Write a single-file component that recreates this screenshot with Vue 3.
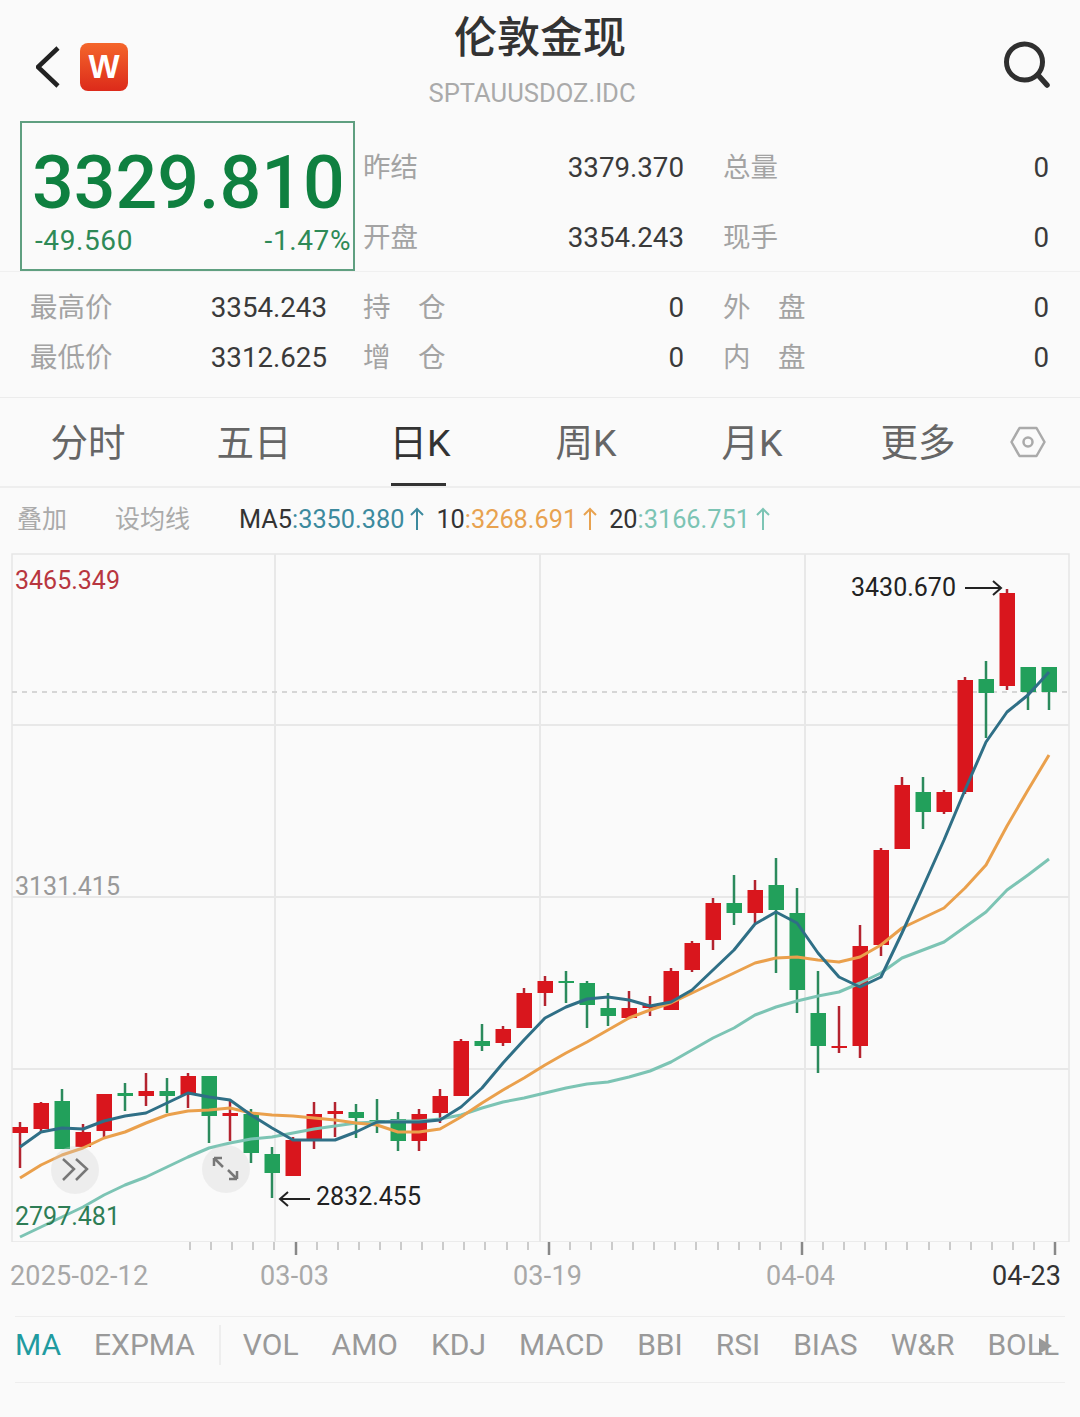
<template>
  <div class="page">
    <header class="top-bar">
      <div class="top-left">
        <svg class="back" width="24" height="44" viewBox="0 0 24 44">
          <path d="M22 3 L2 22 L22 41" fill="none" stroke="#222" stroke-width="4.5" />
        </svg>
        <div class="logo">W</div>
      </div>
      <div class="title-box">
        <div class="title">伦敦金现</div>
        <div class="code">SPTAUUSDOZ.IDC</div>
      </div>
      <div class="top-right">
        <svg width="50" height="50" viewBox="0 0 50 50">
          <circle cx="22.5" cy="21" r="18" fill="none" stroke="#2f2f2f" stroke-width="5" />
          <path d="M36 34 L45 44" stroke="#2f2f2f" stroke-width="5.5" stroke-linecap="round" />
        </svg>
      </div>
    </header>

    <section class="quote">
      <div class="price-box">
        <div class="price">3329.810</div>
        <div class="change">
          <span>-49.560</span>
          <span>-1.47%</span>
        </div>
      </div>
      <div class="quote-stats">
        <div v-for="row in topRows" :key="row[0]" class="quote-row">
          <div class="pair col-b"><span class="lbl">{{ row[0] }}</span><span class="val">{{ row[1] }}</span></div>
          <div class="pair col-c"><span class="lbl">{{ row[2] }}</span><span class="val">{{ row[3] }}</span></div>
        </div>
      </div>
    </section>

    <section class="stats">
      <div v-for="row in lowRows" :key="row[0]" class="stat-row">
        <div class="pair col-a"><span class="lbl">{{ row[0] }}</span><span class="val">{{ row[1] }}</span></div>
        <div class="pair col-b"><span class="lbl">{{ row[2] }}</span><span class="val">{{ row[3] }}</span></div>
        <div class="pair col-c"><span class="lbl">{{ row[4] }}</span><span class="val">{{ row[5] }}</span></div>
      </div>
    </section>

    <nav class="tabs">
      <div v-for="t in tabs" :key="t" class="tab" :class="{ active: t === '日K' }"><span class="tab-text">{{ t }}</span></div>
      <svg class="hex" width="36" height="32" viewBox="0 0 36 32">
        <path d="M1.5 16 L9.5 2 H26.5 L34.5 16 L26.5 30 H9.5 Z" fill="none" stroke="#aaa" stroke-width="2.5" stroke-linejoin="round" />
        <circle cx="18" cy="16" r="4.5" fill="none" stroke="#aaa" stroke-width="2.5" />
      </svg>
    </nav>

    <div class="legend">
      <span class="tool">叠加</span>
      <span class="tool second">设均线</span>
      <div class="ma-values">
        <span v-for="m in maLegend" :key="m.name" class="ma-item">
          <span class="ma-name">{{ m.name }}</span><span :style="{ color: m.color }">:{{ m.value }}</span>
          <svg class="up" width="16" height="24" viewBox="0 0 16 24">
            <path d="M8 23 V2 M2 8 L8 2 L14 8" fill="none" :stroke="m.color" stroke-width="2" />
          </svg>
        </span>
      </div>
    </div>

    <div class="chart">
      <svg class="plot" width="1080" height="689" viewBox="0 553 1080 689">
        <rect x="12" y="554" width="1057" height="688" fill="none" stroke="#e6e6e6" stroke-width="1.5" />
        <path d="M275 554 V1242 M540 554 V1242 M805 554 V1242 M12 725 H1069 M12 897 H1069 M12 1069 H1069" stroke="#e8e8e8" stroke-width="2" />
        <path d="M12 692 H1069" stroke="#d6d6d6" stroke-width="2" stroke-dasharray="5 5" />
        <g v-for="(c, i) in candles" :key="i">
          <line :x1="xAt(i)" :x2="xAt(i)" :y1="c[2]" :y2="c[3]" :stroke="c[4] === 'r' ? '#b3232f' : '#2b8a5c'" stroke-width="2.5" />
          <rect :x="xAt(i) - 7.5" :y="c[0]" width="15.5" :height="c[1] - c[0]" :fill="c[4] === 'r' ? '#d9161d' : '#22a05b'" />
        </g>
        <path :d="linePath(ma20)" fill="none" stroke="#7cc4b4" stroke-width="3" stroke-linejoin="round" />
        <path :d="linePath(ma10)" fill="none" stroke="#eaa04c" stroke-width="3" stroke-linejoin="round" />
        <path :d="linePath(ma5)" fill="none" stroke="#2f6f86" stroke-width="3" stroke-linejoin="round" />

        <circle cx="75" cy="1170" r="24" fill="#cfcfcf" fill-opacity="0.3" />
        <path d="M63 1159 L74 1169 L63 1180 M76 1159 L87 1169 L76 1180" fill="none" stroke="#777" stroke-width="2.5" />
        <circle cx="226" cy="1169" r="24" fill="#cfcfcf" fill-opacity="0.3" />
        <path d="M214 1158 L223 1167 M214 1158 V1166 M214 1158 H222 M237 1179 L228 1170 M237 1179 V1171 M237 1179 H229" fill="none" stroke="#777" stroke-width="2.5" />

        <path d="M965 588 H1001 M993 581 L1001 588 L993 595" fill="none" stroke="#222" stroke-width="2" />
        <path d="M310 1199 H280 M288 1192 L280 1199 L288 1206" fill="none" stroke="#222" stroke-width="2" />
      </svg>
      <span class="axis red">3465.349</span>
      <span class="axis mid">3131.415</span>
      <span class="axis green">2797.481</span>
      <span class="note high">3430.670</span>
      <span class="note low">2832.455</span>
    </div>

    <svg class="ruler" width="1080" height="14" viewBox="0 0 1080 14">
      <line v-for="t in ticks" :key="t.x" :x1="t.x" :x2="t.x" y1="0" :y2="t.major ? 13 : 8" :stroke="t.major ? '#888' : '#bbb'" :stroke-width="t.major ? 2.5 : 1.5" />
    </svg>

    <div class="dates">
      <span>2025-02-12</span>
      <span>03-03</span>
      <span>03-19</span>
      <span>04-04</span>
      <span class="last">04-23</span>
    </div>

    <div class="indicators">
      <span class="ind on">MA</span>
      <span class="ind">EXPMA</span>
      <span class="divider"></span>
      <span v-for="n in indicators" :key="n" class="ind">{{ n }}</span>
      <svg class="more" width="13" height="16" viewBox="0 0 13 16">
        <path d="M0 0 L13 8 L0 16 Z" fill="#999" />
      </svg>
    </div>
  </div>
</template>

<script setup>
const topRows = [
  ['昨结', '3379.370', '总量', '0'],
  ['开盘', '3354.243', '现手', '0'],
]

const lowRows = [
  ['最高价', '3354.243', '持　仓', '0', '外　盘', '0'],
  ['最低价', '3312.625', '增　仓', '0', '内　盘', '0'],
]

const tabs = ['分时', '五日', '日K', '周K', '月K', '更多']

const maLegend = [
  { name: 'MA5', value: '3350.380', color: '#3c8a9e' },
  { name: '10', value: '3268.691', color: '#e8a24f' },
  { name: '20', value: '3166.751', color: '#7cc4b4' },
]

const indicators = ['VOL', 'AMO', 'KDJ', 'MACD', 'BBI', 'RSI', 'BIAS', 'W&R', 'BOLL']

// body top, body bottom, wick top, wick bottom, colour (page pixels)
const candles = [
  [1127, 1133, 1122, 1168, 'r'], [1103, 1129, 1102, 1132, 'r'], [1101, 1149, 1089, 1149, 'g'],
  [1132, 1147, 1124, 1148, 'r'], [1094, 1131, 1094, 1137, 'r'], [1093, 1096, 1083, 1111, 'g'],
  [1091, 1096, 1073, 1106, 'r'], [1091, 1096, 1078, 1113, 'g'], [1076, 1095, 1073, 1108, 'r'],
  [1076, 1116, 1076, 1143, 'g'], [1113, 1116, 1100, 1141, 'r'], [1114, 1153, 1109, 1163, 'g'],
  [1154, 1173, 1147, 1198, 'g'], [1140, 1176, 1137, 1176, 'r'], [1114, 1139, 1102, 1149, 'r'],
  [1111, 1114, 1102, 1137, 'r'], [1112, 1118, 1104, 1138, 'g'], [1120, 1122, 1099, 1133, 'g'],
  [1119, 1141, 1112, 1151, 'g'], [1114, 1141, 1109, 1151, 'r'], [1096, 1113, 1089, 1123, 'r'],
  [1041, 1096, 1039, 1096, 'r'], [1041, 1046, 1024, 1051, 'g'], [1029, 1043, 1026, 1046, 'r'],
  [993, 1028, 988, 1028, 'r'], [981, 993, 976, 1006, 'r'], [981, 983, 971, 1003, 'g'],
  [983, 1005, 981, 1028, 'g'], [1008, 1016, 993, 1026, 'g'], [1008, 1018, 991, 1019, 'r'],
  [1005, 1008, 996, 1016, 'r'], [971, 1010, 968, 1010, 'r'], [943, 970, 941, 972, 'r'],
  [903, 940, 898, 950, 'r'], [903, 913, 875, 925, 'g'], [890, 913, 880, 923, 'r'],
  [885, 910, 858, 973, 'g'], [913, 990, 888, 1013, 'g'], [1013, 1046, 971, 1073, 'g'],
  [1046, 1048, 1006, 1053, 'r'], [946, 1046, 925, 1058, 'r'], [850, 945, 848, 956, 'r'],
  [785, 849, 777, 849, 'r'], [792, 812, 777, 829, 'g'], [792, 812, 790, 814, 'r'],
  [680, 792, 677, 794, 'r'], [679, 693, 661, 738, 'g'], [593, 686, 589, 690, 'r'],
  [667, 692, 667, 710, 'g'], [667, 692, 667, 710, 'g'],
]

const ma5 = [1147, 1132, 1128, 1129, 1121, 1116, 1113, 1103, 1093, 1097, 1100, 1115, 1128, 1140, 1140, 1140, 1132, 1122, 1122, 1122, 1120, 1107, 1088, 1063, 1040, 1018, 1007, 999, 997, 1000, 1006, 1002, 990, 970, 950, 924, 912, 923, 953, 977, 987, 977, 933, 887, 840, 790, 742, 712, 695, 672]
const ma10 = [1178, 1165, 1155, 1148, 1138, 1132, 1123, 1115, 1111, 1110, 1108, 1113, 1115, 1116, 1118, 1120, 1123, 1125, 1132, 1132, 1129, 1117, 1103, 1090, 1078, 1065, 1053, 1042, 1030, 1018, 1010, 1003, 993, 983, 973, 963, 958, 957, 960, 962, 957, 945, 928, 918, 908, 888, 865, 826, 790, 755]
const ma20 = [1237, 1227, 1217, 1207, 1195, 1185, 1177, 1167, 1157, 1148, 1143, 1139, 1137, 1133, 1129, 1126, 1123, 1122, 1121, 1121, 1119, 1115, 1108, 1102, 1098, 1093, 1088, 1084, 1082, 1077, 1071, 1062, 1050, 1038, 1028, 1015, 1007, 1001, 996, 992, 983, 973, 958, 950, 942, 927, 912, 890, 875, 859]

const xAt = (i) => 20 + i * 21

const linePath = (ys) => ys.map((y, i) => `${i ? 'L' : 'M'}${xAt(i)} ${y}`).join(' ')

const ticks = []
for (let i = 0; i <= 41; i++) {
  ticks.push({ x: Math.round(190 + i * 21.1), major: (i - 5) % 12 === 0 })
}
</script>

<style scoped>
.page {
  width: 1080px;
  height: 1417px;
  overflow: hidden;
  background: #fafafa;
  font-family: Roboto, "Noto Sans CJK SC", sans-serif;
  color: #333;
}

.top-bar {
  display: grid;
  grid-template-columns: 1fr auto 1fr;
  height: 121px;
}
.top-left {
  display: flex;
  align-items: center;
  padding: 12px 0 0 36px;
  gap: 20px;
}
.back {
  display: block;
}
.logo {
  width: 48px;
  height: 48px;
  border-radius: 8px;
  background: linear-gradient(#f4662b, #dc2a1a);
  color: #fff;
  font: bold 33px/48px "Liberation Sans", sans-serif;
  text-align: center;
}
.title-box {
  text-align: center;
}
.title {
  font-size: 43px;
  line-height: 50px;
  font-weight: 500;
  padding-top: 13px;
  color: #333;
}
.code {
  font-size: 25.6px;
  line-height: 30px;
  margin: 15px 16px 0 0;
  color: #aaa;
}
.top-right {
  display: flex;
  align-items: center;
  justify-content: flex-end;
  padding: 11px 28px 0 0;
}

.quote {
  display: flex;
  height: 151px;
  padding-left: 20px;
  border-bottom: 1px solid #f0f0f0;
  box-sizing: border-box;
}
.price-box {
  width: 335px;
  height: 150px;
  box-sizing: border-box;
  border: 2px solid #5f9f80;
  padding: 0 2px 0 10px;
}
.price {
  font-size: 73.5px;
  line-height: 84px;
  font-weight: 500;
  margin-top: 18px;
  color: #0f8040;
  white-space: nowrap;
}
.change {
  display: flex;
  justify-content: space-between;
  font-size: 28px;
  letter-spacing: 0.6px;
  line-height: 34px;
  padding-left: 3px;
  margin-top: -1px;
  color: #2e8a57;
}
.quote-stats {
  margin-left: 8px;
  padding-top: 11px;
}
.quote-row {
  display: flex;
  height: 70px;
  align-items: center;
}

.stats {
  height: 126px;
  padding: 10px 0 0 30px;
  box-sizing: border-box;
  border-bottom: 1px solid #ececec;
}
.stat-row {
  display: flex;
  height: 50px;
  align-items: center;
}
.pair {
  display: flex;
  justify-content: space-between;
  align-items: center;
  font-size: 27.7px;
}
.col-a {
  width: 297px;
  margin-right: 36px;
}
.col-b {
  width: 321px;
  margin-right: 39px;
}
.col-c {
  width: 326px;
}
.lbl {
  font-size: 27.5px;
  color: #a3a3a3;
  white-space: nowrap;
  margin-bottom: 4px;
}
.val {
  color: #3a3a3a;
}

.tabs {
  display: flex;
  align-items: center;
  height: 90px;
  padding-left: 5px;
  border-bottom: 2px solid #eee;
  box-sizing: border-box;
}
.tab {
  position: relative;
  width: 166px;
  text-align: center;
  font-size: 37.5px;
  line-height: 88px;
  color: #666;
}
.tab-text {
  display: block;
  padding-top: 1px;
  height: 87px;
}
.tab.active {
  color: #333;
}
.tab.active::after {
  content: "";
  position: absolute;
  left: 54px;
  bottom: 0;
  width: 55px;
  height: 3px;
  background: #333;
}
.hex {
  margin: 0 0 0 9px;
}

.legend {
  display: flex;
  align-items: center;
  height: 65px;
  padding: 0 0 3px 17px;
  font-size: 25.3px;
  box-sizing: border-box;
}
.tool {
  font-size: 25px;
  color: #aaa;
  margin-bottom: 4px;
}
.second {
  margin-left: 48px;
}
.ma-values {
  display: flex;
  margin-left: 49px;
  gap: 11px;
}
.ma-item {
  display: flex;
  align-items: center;
  white-space: nowrap;
}
.ma-name {
  color: #333;
}
.up {
  margin-left: 5px;
}

.chart {
  position: relative;
  height: 689px;
}
.plot {
  display: block;
}
.axis,
.note {
  position: absolute;
  font-size: 25px;
  line-height: 30px;
}
.axis {
  left: 15px;
}
.red {
  top: 13px;
  color: #b8363f;
}
.mid {
  top: 319px;
  color: #999;
}
.green {
  top: 649px;
  color: #2e7d55;
}
.note {
  color: #222;
}
.high {
  left: 851px;
  top: 20px;
}
.low {
  left: 316px;
  top: 629px;
}

.ruler {
  display: block;
}

.dates {
  display: grid;
  grid-template-columns: 250px 253px 253px 226px auto;
  padding-left: 10px;
  height: 60px;
  font-size: 27px;
  letter-spacing: 0.2px;
  line-height: 40px;
  color: #a8a8a8;
}
.last {
  color: #333;
}

.indicators {
  position: relative;
  display: flex;
  align-items: center;
  gap: 33px;
  margin: 0 15px;
  height: 67px;
  padding-bottom: 10px;
  border-top: 1px solid #eee;
  border-bottom: 1px solid #eee;
  box-sizing: border-box;
  font-size: 30px;
  color: #999;
  white-space: nowrap;
}
.on {
  color: #1f9ba0;
}
.divider {
  width: 2px;
  height: 40px;
  margin: 0 -11px 0 -9px;
  background: #eee;
}
.more {
  position: absolute;
  left: 1024px;
  top: 21px;
}
</style>

<style>
html,
body {
  margin: 0;
  background: #fafafa;
}
</style>
